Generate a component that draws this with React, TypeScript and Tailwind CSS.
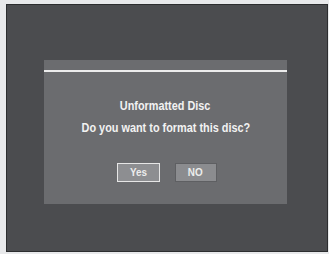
export default function App() {
  return (
    <div className="w-[329px] h-[254px] bg-[#e8e9eb] pl-[6px] pt-[4px] pr-[1px] pb-[2px]" style={{ fontFamily: '"Liberation Sans", Arial, sans-serif' }}>
      <div className="w-full h-full bg-[#4b4c4f] border border-[#2c2d2f] pl-[37px] pt-[55px]">
        <div className="w-[243px] h-[144px] bg-[#6b6c6f] flex flex-col">
          <div className="h-[10px]" />
          <div className="h-[2px] bg-[#ececec]" />
          <div className="pt-[23px] flex flex-col items-center text-[12.5px] font-bold leading-[22px] text-[#f2f2f2]">
            <span className="inline-block scale-x-[0.87] whitespace-nowrap">Unformatted Disc</span>
            <span className="inline-block scale-x-[0.87] whitespace-nowrap">Do you want to format this disc?</span>
          </div>
          <div className="mt-[24px] flex justify-center gap-[15px] pl-[2px]">
            <div className="w-[43px] h-[19px] bg-[#8d8e91] border-[1.5px] border-[#e6e6e6] flex items-center justify-center text-[11px] font-bold text-[#ececec]">
              <span className="inline-block scale-x-[0.9]">Yes</span>
            </div>
            <div className="w-[42px] h-[19px] bg-[#8b8c8f] border border-[#5e5f62] flex items-center justify-center text-[11px] font-bold text-[#ececec]">
              <span className="inline-block scale-x-[0.9]">NO</span>
            </div>
          </div>
        </div>
      </div>
    </div>
  );
}
